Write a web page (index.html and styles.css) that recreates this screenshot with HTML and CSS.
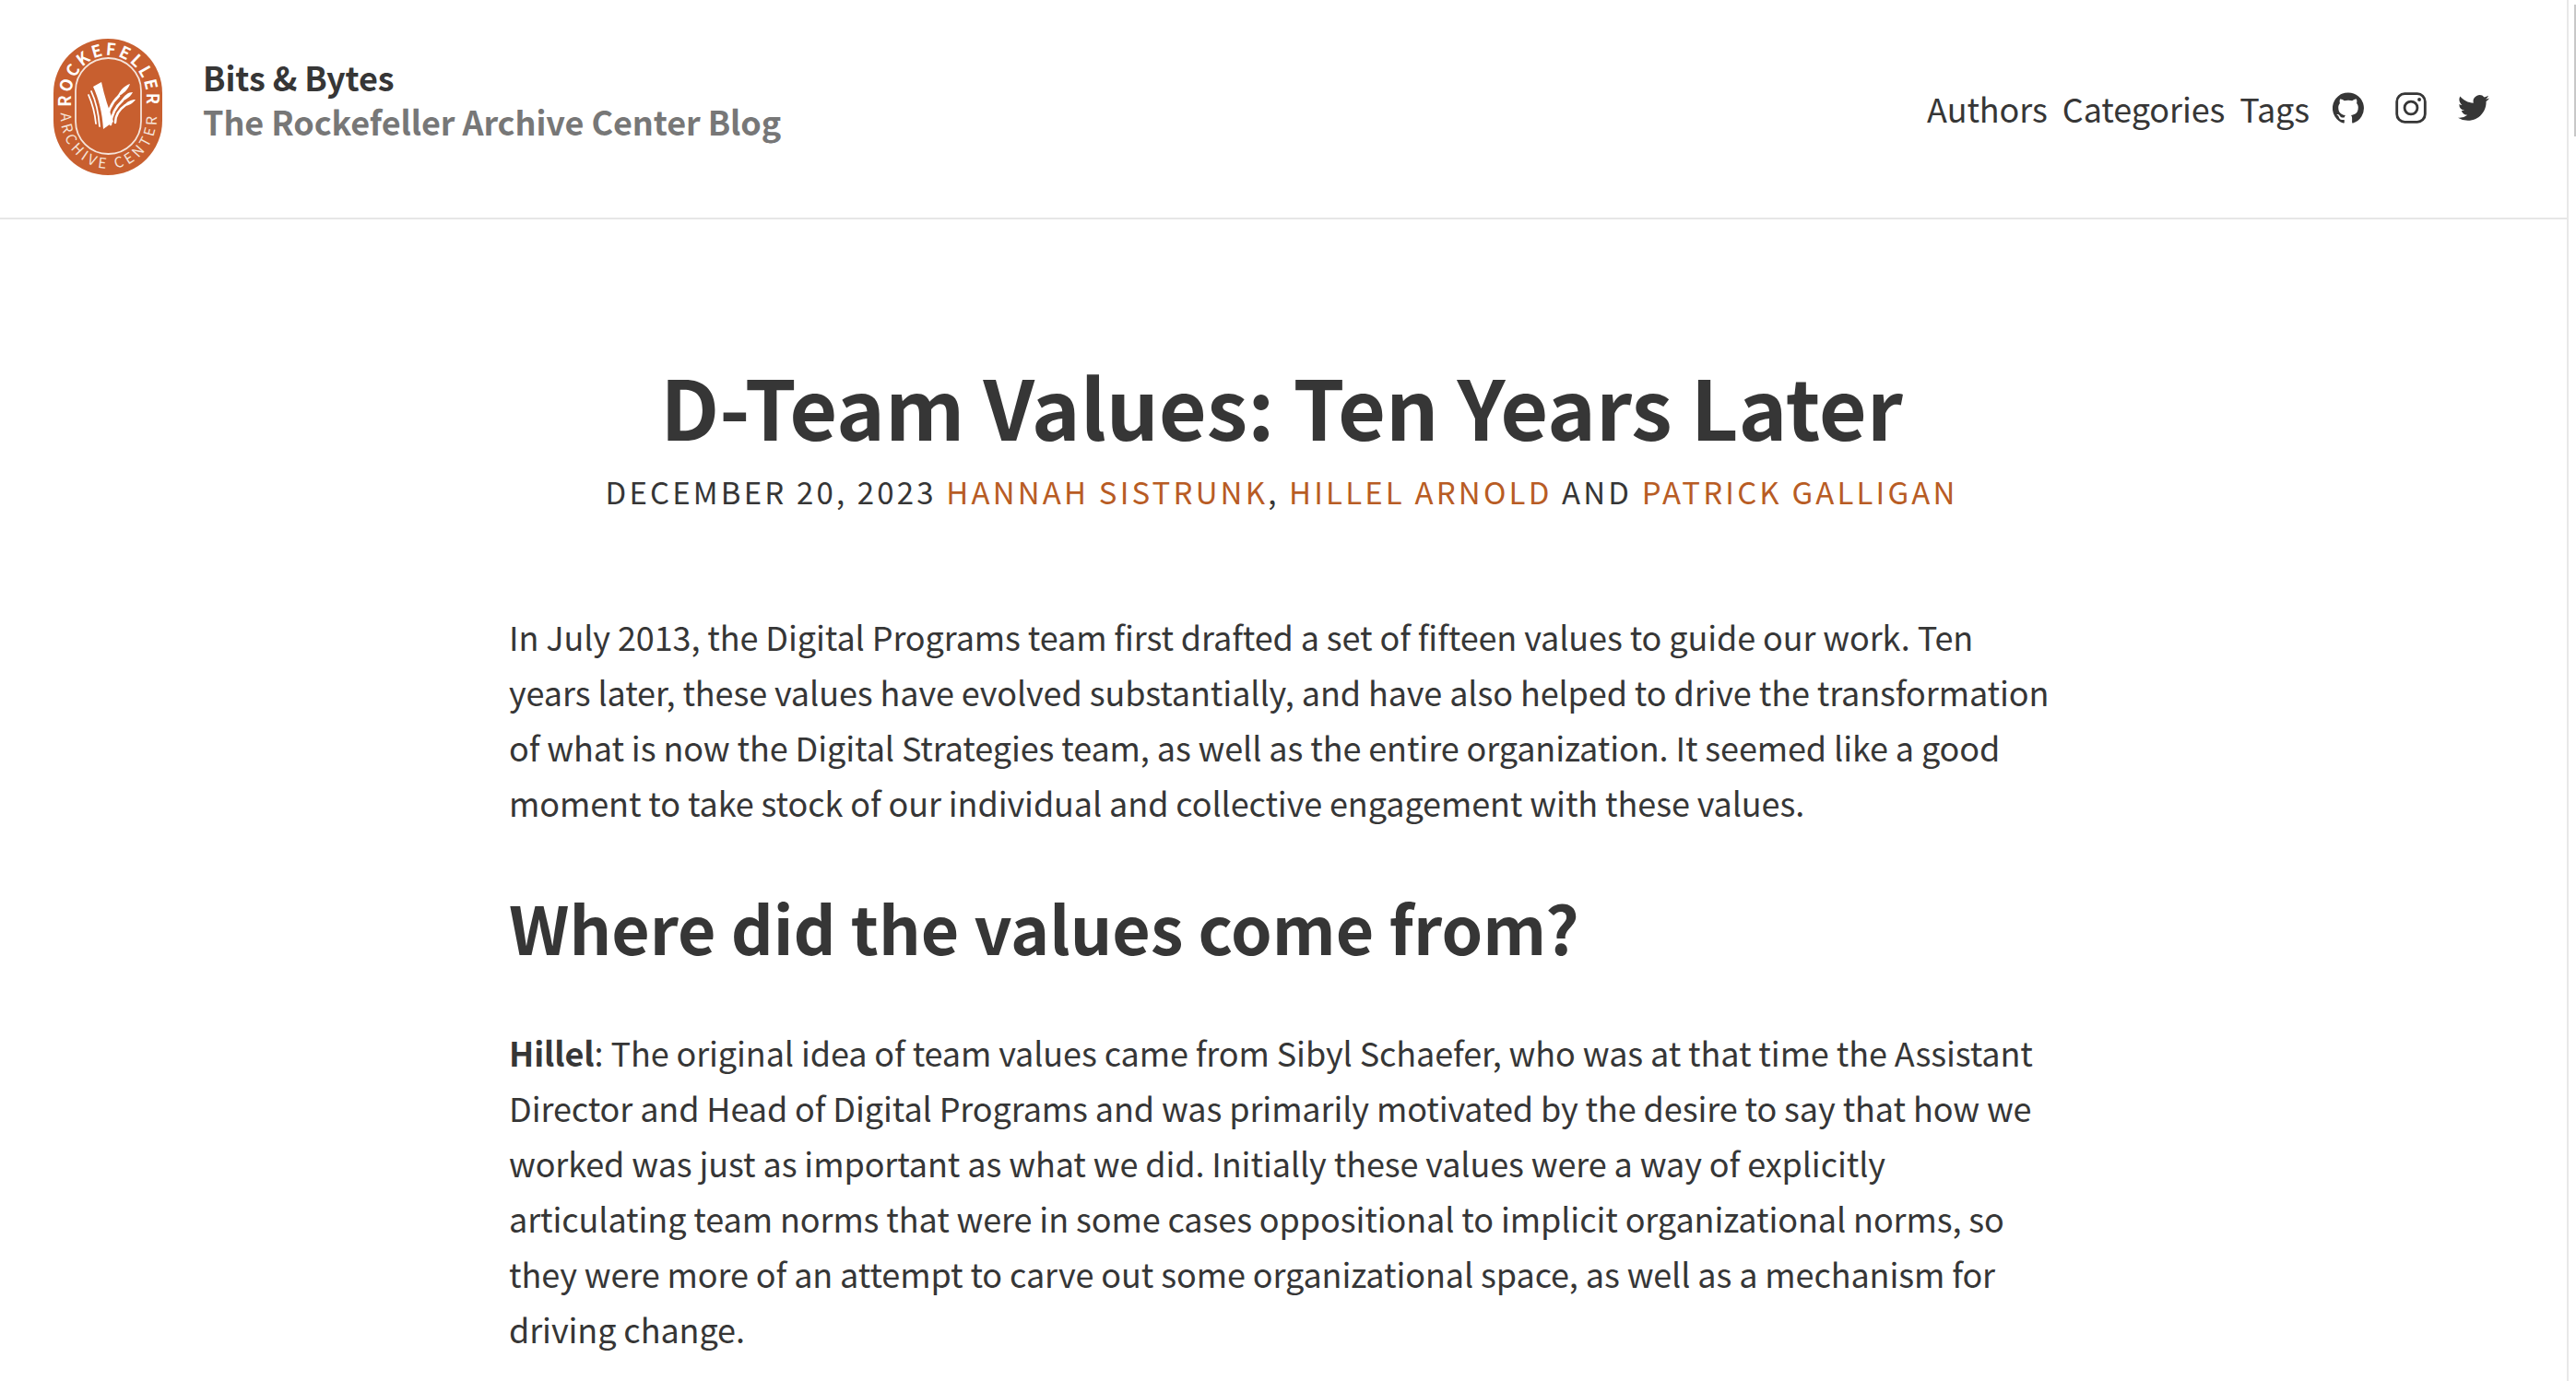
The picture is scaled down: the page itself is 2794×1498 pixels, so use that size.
FILE: index.html
```html
<!DOCTYPE html>
<html lang="en">
<head>
    <meta charset="UTF-8">
    <title>D-Team Values: Ten Years Later</title>
    <link rel="stylesheet" href="styles.css">
</head>
<body>
    <div class="page">
        <header class="site-header">
            <a href="#" class="brand">
                <svg class="logo" viewBox="0 0 118 148" aria-hidden="true">
                    <defs>
                        <path id="arcTop" d="M19 80 V64 A41 46 0 0 1 101 64 V80"/>
                        <path id="arcBottom" d="M8 66 V85 A52 56 0 0 0 112 85 V66"/>
                    </defs>
                    <rect width="118" height="148" rx="59" fill="#c85f2f"/>
                    <rect x="24" y="21" width="71" height="104" rx="35.500" fill="none" stroke="#f5e4da" stroke-width="1.800"/>
                    <text class="logo-top"><textPath href="#arcTop" startOffset="50%" text-anchor="middle">ROCKEFELLER</textPath></text>
                    <text class="logo-bottom"><textPath href="#arcBottom" startOffset="50%" text-anchor="middle">ARCHIVE CENTER</textPath></text>
                    <path d="M43 52 L52 47 C55 62 60 76 65 90 L54 98 C53 80 49 65 43 52Z" fill="#fff"/>
                    <path d="M69 63 C73 55 77 51 83 49 C81 55 76 60 69 63Z M73 68 C77 61 81 58 86 58 C84 62 80 66 73 68Z M76 73 C80 68 84 66 89 66 C86 70 82 73 76 73Z" fill="#fff"/>
                    <g fill="none" stroke="#fff" stroke-linecap="round">
                        <path d="M38 61 C42 70 45 82 46 92" stroke-width="1.800"/>
                        <path d="M41 57 C46 68 49 82 50 95" stroke-width="1.800"/>
                        <path d="M57 94 C58 80 62 70 71 62" stroke-width="2.600"/>
                        <path d="M62 93 C63 82 67 74 75 67" stroke-width="2.600"/>
                        <path d="M67 91 C67 83 71 77 78 72" stroke-width="2.600"/>
                    </g>
                </svg>
                <div class="brand-text">
                    <div class="brand-name">Bits &amp; Bytes</div>
                    <div class="brand-sub">The Rockefeller Archive Center Blog</div>
                </div>
            </a>
            <nav class="site-nav">
                <a href="#">Authors</a>
                <a href="#">Categories</a>
                <a href="#">Tags</a>
                <div class="nav-icons">
                    <a href="#" class="nav-icon">
                        <svg viewBox="0 0 24 24"><path fill="currentColor" d="M12 .3a12 12 0 0 0-3.800 23.400c.6.100.8-.3.8-.6v-2c-3.300.7-4-1.600-4-1.600-.5-1.400-1.300-1.800-1.300-1.800-1.100-.7.100-.7.100-.7 1.200.1 1.800 1.200 1.800 1.200 1.100 1.800 2.800 1.300 3.500 1 .1-.8.4-1.300.8-1.600-2.700-.3-5.500-1.300-5.500-5.900 0-1.300.5-2.400 1.200-3.200-.1-.3-.5-1.500.1-3.200 0 0 1-.3 3.300 1.200a11.500 11.500 0 0 1 6 0c2.300-1.500 3.300-1.200 3.300-1.200.6 1.700.2 2.900.1 3.200.8.800 1.200 1.900 1.200 3.200 0 4.600-2.800 5.600-5.500 5.900.4.400.8 1.100.8 2.200v3.300c0 .3.200.7.800.6A12 12 0 0 0 12 .3"/></svg>
                    </a>
                    <a href="#" class="nav-icon">
                        <svg viewBox="0 0 24 24" fill="none" stroke="currentColor" stroke-width="2"><rect x="1.200" y="1.200" width="21.600" height="21.600" rx="6"/><circle cx="12" cy="12" r="4.900"/><circle cx="18.400" cy="5.600" r="1.400" fill="currentColor" stroke="none"/></svg>
                    </a>
                    <a href="#" class="nav-icon">
                        <svg viewBox="0 0 24 24"><path fill="currentColor" d="M23.950 4.570a10 10 0 0 1-2.820.77 4.960 4.960 0 0 0 2.160-2.720c-.95.550-2 .96-3.130 1.200a4.920 4.920 0 0 0-8.380 4.480C7.690 8.100 4.070 6.130 1.640 3.160a4.820 4.820 0 0 0-.67 2.480c0 1.710.87 3.210 2.190 4.090a4.900 4.900 0 0 1-2.230-.62v.06a4.920 4.920 0 0 0 3.950 4.830 5 5 0 0 1-2.210.08 4.940 4.940 0 0 0 4.600 3.420A9.870 9.870 0 0 1 0 19.540a14 14 0 0 0 7.560 2.210c9.050 0 14-7.500 14-13.980 0-.21 0-.42-.02-.63a9.940 9.940 0 0 0 2.460-2.550z"/></svg>
                    </a>
                </div>
            </nav>
        </header>

        <main class="post">
            <div class="post-head">
                <h1>D-Team Values: Ten Years Later</h1>
                <p class="post-meta">December 20, 2023 <a href="#">Hannah Sistrunk</a>, <a href="#">Hillel Arnold</a> and <a href="#">Patrick Galligan</a></p>
            </div>
            <div class="post-body">
                <p>In July 2013, the Digital Programs team first drafted a set of fifteen values to guide our work. Ten years later, these values have evolved substantially, and have also helped to drive the transformation of what is now the Digital Strategies team, as well as the entire organization. It seemed like a good moment to take stock of our individual and collective engagement with these values.</p>
                <h2>Where did the values come from?</h2>
                <p><strong>Hillel</strong>: The original idea of team values came from Sibyl Schaefer, who was at that time the Assistant Director and Head of Digital Programs and was primarily motivated by the desire to say that how we worked was just as important as what we did. Initially these values were a way of explicitly articulating team norms that were in some cases oppositional to implicit organizational norms, so they were more of an attempt to carve out some organizational space, as well as a mechanism for driving change.</p>
            </div>
        </main>
    </div>
    <div class="scroll-thumb"></div>
</body>
</html>
```
FILE: styles.css
```css
html, body {
    height: 100%;
    overflow: hidden;
}

body {
    margin: 0;
    background-color: #fff;
    color: #363636;
    font-family: "Noto Sans CJK SC", "Noto Sans", sans-serif;
    font-size: 36px;
    line-height: 60px;
    letter-spacing: -0.1px;
}

a {
    color: inherit;
    text-decoration: none;
}

.page {
    width: 2784px;
    height: 100%;
    border-right: 2px solid #e8e8e8;
}

/* overlay scrollbar in the screenshot */
.scroll-thumb {
    position: absolute;
    top: 5px;
    right: 0;
    width: 2px;
    height: 143px;
    background-color: #c8c8c8;
}

.site-header {
    height: 236px;
    border-bottom: 2px solid #e6e6e6;
    display: flex;
    justify-content: space-between;
    align-items: center;
    padding: 0 84px 0 58px;
}

.brand {
    display: flex;
    align-items: center;
    gap: 44px;
}

.logo {
    width: 118px;
    height: 148px;
    display: block;
    margin-bottom: 4px;
}

.logo-top {
    font-size: 18px;
    font-weight: 700;
    fill: #fff;
    letter-spacing: 2.600px;
}

.logo-bottom {
    font-size: 15.500px;
    fill: #f5e4da;
    letter-spacing: 3.800px;
}

.brand-text {
    padding-bottom: 22px;
}

.brand-name {
    font-weight: 700;
    line-height: 48px;
}

.brand-sub {
    font-weight: 700;
    color: #777;
    line-height: 48px;
}

.site-nav {
    display: flex;
    align-items: center;
    gap: 16px;
    padding-bottom: 2px;
}

.nav-icons {
    display: flex;
    gap: 34px;
    margin-left: 9px;
}

.nav-icon {
    display: flex;
    width: 34px;
    height: 34px;
}

.nav-icon svg {
    width: 34px;
    height: 34px;
}

.post {
    width: 1676px;
    margin-left: 552px;
}

.post-head {
    text-align: center;
    padding-top: 147px;
}

h1 {
    margin: 0;
    font-size: 89.700px;
    line-height: 108px;
    font-weight: 700;
}

.post-meta {
    margin: 16px -200px 0;
    font-size: 33px;
    line-height: 48px;
    letter-spacing: 3.170px;
    text-transform: uppercase;
}

.post-meta a {
    color: #b85c24;
}

.post-body {
    padding-top: 103px;
}

.post-body p {
    margin: 0;
}

h2 {
    margin: 62px 0 63px;
    font-size: 71.500px;
    line-height: 86px;
    font-weight: 700;
    letter-spacing: normal;
}
```
